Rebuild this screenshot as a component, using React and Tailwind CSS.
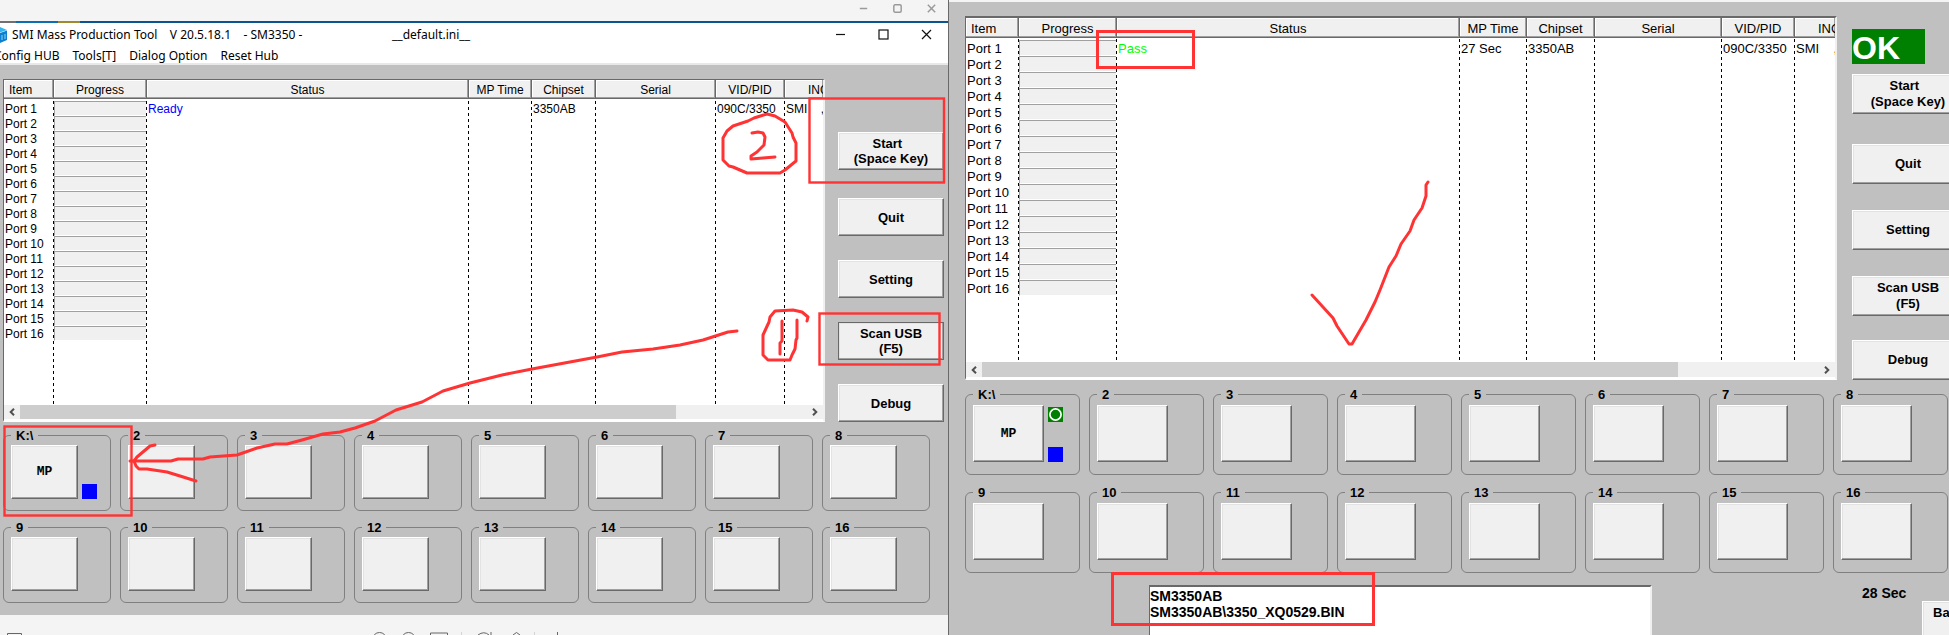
import React from "react";

const PORTS = Array.from({ length: 16 }, (_, i) => i + 1);

const DASH =
  "bg-[repeating-linear-gradient(to_bottom,transparent_0_3px,#000_3px_6px)] bg-[length:1px_100%] bg-right bg-no-repeat";

const BEVEL =
  "bg-[#f0f0f0] border border-t-white border-l-white border-r-[#696969] border-b-[#696969] shadow-[inset_-1px_-1px_0_#a0a0a0,inset_1px_1px_0_#e3e3e3]";

const small = {
  table: "text-[12px]",
  widths: ["w-[50px]", "w-[93px]", "", "w-[63px]", "w-[64px]", "w-[120px]", "w-[69px]", "w-[38px]"],
  frame: "border-t",
  head: "h-[19px] leading-[20px]",
  row: "h-[15px]",
  cell: "h-[15px] leading-[17px]",
  filler: "h-16",
  bar: "h-[14px]",
  thumb: "w-[656px]",
  action: "w-[106px] h-[38px] leading-[15px]",
  groups: "mt-[6px] pl-[3px] pr-[18px] gap-y-[9px]",
  fieldset: "pb-[11px]",
  slot: "w-[67px] h-[54px]",
  slotRow: "pt-[2px]",
};

const large = {
  table: "text-[13px]",
  widths: ["w-[53px]", "w-[98px]", "", "w-[67px]", "w-[68px]", "w-[127px]", "w-[73px]", "w-[40px]"],
  frame: "border-t-2",
  head: "h-[20px] leading-[21px]",
  row: "h-4",
  cell: "h-4 leading-[18px]",
  filler: "h-[66px]",
  bar: "h-[15px]",
  thumb: "w-[696px]",
  action: "w-[112px] h-10 leading-4",
  groups: "mt-[7px] pl-4 pr-px gap-y-[10px]",
  fieldset: "pb-3",
  slot: "w-[71px] h-[57px]",
  slotRow: "pt-[3px]",
};

const HEADERS = ["Item", "Progress", "Status", "MP Time", "Chipset", "Serial", "VID/PID", "INQUIRY"];

function PortTable({ size, status, statusColor, time }) {
  return (
    <div
      className={`min-w-0 flex-1 border-l border-r-2 border-b-2 border-t-[#696969] border-l-[#696969] border-r-[#f0f0f0] border-b-white bg-white pb-px ${size.frame}`}
    >
      <table className={`w-full table-fixed border-separate border-spacing-0 ${size.table}`}>
        <colgroup>
          {size.widths.map((w, i) => (
            <col key={i} className={`${w} ${i < 7 ? DASH : ""}`} />
          ))}
        </colgroup>
        <thead>
          <tr>
            {HEADERS.map((h, i) => (
              <th key={h} scope="col" className="overflow-hidden p-0 pb-[2px] font-normal">
                <div
                  className={`overflow-hidden whitespace-nowrap border-b border-b-[#696969] bg-[#f0f0f0] shadow-[inset_-1px_-1px_0_#a0a0a0,inset_1px_1px_0_#fff] ${size.head} ${
                    i < 7 ? "border-r border-r-[#696969]" : ""
                  } ${i === 0 ? "pl-[5px] text-left" : i === 7 ? "pl-[23px] text-left" : "text-center"}`}
                >
                  {h}
                </div>
              </th>
            ))}
          </tr>
        </thead>
        <tbody>
          {PORTS.map((n) => (
            <tr key={n} className={size.row}>
              <td className="p-0 pl-px">
                <div className={`overflow-hidden whitespace-nowrap ${size.cell}`}>Port {n}</div>
              </td>
              <td className="p-0 pr-px">
                <div
                  className={`border-t border-b border-l border-t-[#a0a0a0] border-b-white border-l-[#a0a0a0] bg-[#f0f0f0] ${size.cell}`}
                />
              </td>
              {[status, time, "3350AB", "", "090C/3350", "SMI    ,"].map((value, i) => (
                <td key={i} className="p-0 pl-px">
                  <div
                    className={`overflow-hidden whitespace-pre ${size.cell} ${i === 0 ? statusColor : ""}`}
                  >
                    {n === 1 ? value : ""}
                  </div>
                </td>
              ))}
            </tr>
          ))}
          <tr className={size.filler} aria-hidden="true">
            {HEADERS.map((h) => (
              <td key={h} className="p-0" />
            ))}
          </tr>
        </tbody>
      </table>
      <div className={`flex items-center bg-[#f0f0f0] ${size.bar}`}>
        <button type="button" aria-label="Scroll left" className="flex h-full w-4 shrink-0 items-center justify-center">
          <svg width="6" height="8" viewBox="0 0 6 8" fill="none" stroke="#505050" strokeWidth="2">
            <path d="M5 0.7 1.7 4 5 7.3" />
          </svg>
        </button>
        <div className={`h-full bg-[#cdcdcd] ${size.thumb}`} />
        <button type="button" aria-label="Scroll right" className="ml-auto flex h-full w-4 shrink-0 items-center justify-center">
          <svg width="6" height="8" viewBox="0 0 6 8" fill="none" stroke="#505050" strokeWidth="2">
            <path d="M1 0.7 4.3 4 1 7.3" />
          </svg>
        </button>
      </div>
    </div>
  );
}

function Action({ size, className = "", children }) {
  return (
    <button
      type="button"
      className={`shrink-0 whitespace-pre-line text-center text-[13px] font-bold ${BEVEL} ${size.action} ${className}`}
    >
      {children}
    </button>
  );
}

function PortGroups({ size, passed }) {
  return (
    <div className={`grid grid-cols-8 gap-x-[9px] ${size.groups}`}>
      {PORTS.map((n) => (
        <fieldset key={n} className={`min-w-0 rounded-[6px] border border-[#808080] px-[7px] ${size.fieldset}`}>
          <legend className="px-[5px] text-[13px] leading-[15px] font-bold">{n === 1 ? "K:\\" : n}</legend>
          <div className={`flex gap-1 ${size.slotRow}`}>
            <button
              type="button"
              aria-label={n === 1 ? undefined : `Port ${n}`}
              className={`shrink-0 font-['Liberation_Mono',monospace] text-[13px] font-bold ${BEVEL} ${size.slot}`}
            >
              {n === 1 ? "MP" : ""}
            </button>
            {n === 1 && (
              <div className="flex flex-col justify-end">
                {passed && (
                  <svg width="15" height="15" viewBox="0 0 15 15" className="mt-[2px] mb-auto">
                    <rect width="15" height="15" fill="#008000" />
                    <circle cx="7.5" cy="7.5" r="5.6" fill="none" stroke="#fff" strokeWidth="1.7" />
                  </svg>
                )}
                <span className="h-[15px] w-[15px] bg-[#0000ff]" />
              </div>
            )}
          </div>
        </fieldset>
      ))}
    </div>
  );
}

function CaptionButtons({ width, icon, stroke, rounded }) {
  return (
    <div className="ml-auto flex h-full">
      {["Minimize", "Maximize", "Close"].map((label) => (
        <button key={label} type="button" aria-label={label} className={`flex items-center justify-center ${width}`}>
          <svg viewBox="0 0 11 11" className={icon} fill="none" stroke={stroke} strokeWidth={rounded ? 1.8 : 1.2}>
            {label === "Minimize" && <path d="M1 5.5H10" />}
            {label === "Maximize" && <rect x="1" y="1" width="9" height="9" rx={rounded ? 1.5 : 0} />}
            {label === "Close" && <path d="M1 1 10 10M10 1 1 10" />}
          </svg>
        </button>
      ))}
    </div>
  );
}

function ReadyWindow() {
  return (
    <section className="flex min-w-0 flex-col overflow-hidden border-r border-r-[#696969] bg-[#f4f4f4]">
      <div className="flex h-[21px] shrink-0 pb-[5px]">
        <CaptionButtons width="w-[34px]" icon="h-[9px] w-[9px]" stroke="#9a9a9a" rounded />
      </div>
      <div className="flex h-[2px] shrink-0 bg-[#0a5590]">
        <span className="w-4 bg-[#707070]" />
        <span className="w-[42px] bg-[#0a6fb0]" />
        <span className="w-[22px] bg-[#a08a30]" />
      </div>
      <div className="shrink-0 border-b-2 border-b-[#e8e8e8] bg-white font-['Noto_Sans',sans-serif] text-[12px]">
        <div className="flex h-[23px] items-center whitespace-pre">
          <svg width="7" height="16" viewBox="0 0 7 16">
            <path d="M0 0 7 3 0 5.5Z" fill="#35b5f0" />
            <path d="M0 6 7 3.5V13L0 16Z" fill="#0b7fd0" />
            <path d="M2 8v5M5 7v5" stroke="#8fd4f8" strokeWidth="1" />
          </svg>
          <h1 className="ml-[5px] w-[380px]">{"SMI Mass Production Tool    V 20.5.18.1    - SM3350 -"}</h1>
          <span>__default.ini__</span>
          <CaptionButtons width="w-[43px]" icon="h-[11px] w-[11px]" stroke="#111" />
        </div>
        <nav className="-ml-[6px] flex h-[17px] items-center gap-[13px] pt-[2px]">
          {["Config HUB", "Tools[T]", "Dialog Option", "Reset Hub"].map((item) => (
            <button key={item} type="button" className="whitespace-nowrap">
              {item}
            </button>
          ))}
        </nav>
      </div>
      <div className="shrink-0 bg-[#c0c0c0] pt-[14px] pb-3">
        <div className="flex gap-[13px] pr-1 pl-[3px]">
          <PortTable size={small} status="Ready" statusColor="text-[#0000ff]" time="" />
          <div className="flex shrink-0 flex-col pt-[53px]">
            <Action size={small}>{"Start\u00a0\u00a0\n(Space Key)"}</Action>
            <Action size={small} className="mt-7">Quit</Action>
            <Action size={small} className="mt-6">Setting</Action>
            <Action size={small} className="mt-6 outline outline-[#696969] -outline-offset-1">
              {"Scan USB\n(F5)"}
            </Action>
            <Action size={small} className="mt-6">Debug</Action>
          </div>
        </div>
        <PortGroups size={small} />
      </div>
      <div className="mt-auto h-[3px] shrink-0">
        <svg width="600" height="3" fill="none" stroke="#666">
          <path d="M7.5 3V1.5H21.5V3M430.5 3V1H447.5V3M557.5 0V3" />
          <circle cx="379.5" cy="7.5" r="7" />
          <circle cx="408.5" cy="7.5" r="7" />
          <path d="M478 3Q484 -1.500 489 3M491 0V3M513 3 516.500 0.500 520 3" />
          <path d="M461.500 0V3M534.500 0V3" stroke="#d4d4d4" />
        </svg>
      </div>
    </section>
  );
}

function PassWindow() {
  return (
    <section className="flex min-w-0 flex-col overflow-hidden border-t-2 border-t-[#f4f4f4] bg-[#c0c0c0] pt-[14px]">
      <div className="flex shrink-0 gap-[15px] pl-4">
        <PortTable size={large} status="Pass" statusColor="text-[#00ff00]" time="27 Sec" />
        <div className="flex w-[97px] shrink-0 flex-col items-start pt-[13px]">
          <output className="block h-[35px] w-[73px] bg-[#008000] text-[32px] leading-[38px] font-bold text-white">
            OK
          </output>
          <Action size={large} className="mt-[10px]">{"Start\u00a0\u00a0\n(Space Key)"}</Action>
          <Action size={large} className="mt-[30px]">Quit</Action>
          <Action size={large} className="mt-[26px]">Setting</Action>
          <Action size={large} className="mt-[26px]">{"Scan USB\n(F5)"}</Action>
          <Action size={large} className="mt-6">Debug</Action>
        </div>
      </div>
      <PortGroups size={large} passed />
      <div className="mt-3 flex min-h-0 flex-1 pl-[200px] font-bold">
        <textarea
          readOnly
          aria-label="Firmware log"
          defaultValue={"SM3350AB\nSM3350AB\\3350_XQ0529.BIN"}
          className="h-full min-w-0 flex-1 resize-none overflow-hidden border-t-2 border-r-2 border-l border-t-[#696969] border-r-[#f0f0f0] border-l-[#696969] bg-white pt-px text-[14px] leading-4 outline-none"
        />
        <div className="flex w-[297px] shrink-0 flex-col">
          <span className="h-7 pl-[210px] text-[14px] leading-4">28 Sec</span>
          <button type="button" className={`ml-[270px] h-10 w-[112px] shrink-0 pb-4 pl-[10px] text-left text-[13px] font-bold ${BEVEL}`}>
            Ba
          </button>
        </div>
      </div>
    </section>
  );
}

function Markup() {
  return (
    <svg
      aria-hidden="true"
      className="pointer-events-none absolute inset-0 h-full w-full"
      fill="none"
      stroke="#ff3333"
      strokeWidth="3"
      strokeLinecap="round"
      strokeLinejoin="round"
    >
      <g strokeLinejoin="miter" strokeWidth="2.4">
        <rect x="809.500" y="98.500" width="134.500" height="84" />
        <rect x="819.500" y="313.500" width="120" height="51" />
        <rect x="4.500" y="426.500" width="127" height="89" />
      </g>
      <g strokeLinejoin="miter" strokeWidth="3">
        <rect x="1097.500" y="31.500" width="96" height="36" />
        <rect x="1112.500" y="573.500" width="261" height="51" />
      </g>
      <path d="M737 331 728 332 703 340 680 345 653 349 622 352 597 357 532 369 502 375 470 383 443 391 422 402 396 410 375 421 355 428 340 432 323 434 302 440 287 444 275 444 257 448 237 455 210 457 203 459 178 459 171 461 130 461" />
      <path d="M155 445 150 446 137 457 134 461 136 466 139 469 147 469 167 472 180 476 196 481" />
      <path d="M767 114 754 118 748 121 733 126 727 131 723 138 723 160 729 166 733 167 747 173 780 173 785 170 796 161 796 143 793 137 792 133 785 122 775 116Z" />
      <path d="M752 133 758 132 763 133 765 137 764 145 757 152 751 156 751 159 763 158 775 157" />
      <path d="M807 321 808 317 802 312 793 310 775 311 770 317 769 322 763 335 763 355 768 360 790 360 792 355 795 349 796 340 797 338 797 320" />
      <path d="M782 321V341L780 343V354" />
      <path d="M1312 295 1333 318 1337 326 1349 344 1352 344 1366 320 1375 302 1380 290 1389 267 1396 256 1401 244 1410 231 1414 220 1422 208 1426 196V185L1428 182" />
    </svg>
  );
}

export default function App() {
  return (
    <main className="relative grid h-screen grid-cols-[949fr_1000fr] grid-rows-[100%] overflow-hidden bg-[#c0c0c0] font-['Liberation_Sans',Arial,sans-serif] text-black">
      <ReadyWindow />
      <PassWindow />
      <Markup />
    </main>
  );
}
